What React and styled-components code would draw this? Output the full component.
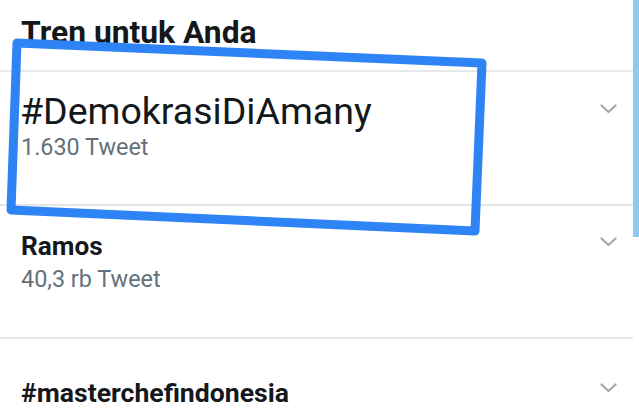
import React from "react";
import styled, { createGlobalStyle } from "styled-components";

const Global = createGlobalStyle`
  html, body { margin: 0; padding: 0; background: #ffffff; }
  body { font-family: Roboto, "Noto Sans", "Liberation Sans", sans-serif; }
`;

const Page = styled.div`
  position: relative;
  width: 639px;
  height: 420px;
  overflow: hidden;
  display: flex;
  align-items: flex-start;
  background: #fff;
`;

const Feed = styled.div`
  width: 633px;
  display: flex;
  flex-direction: column;
`;

const Scrollbar = styled.div`
  width: 6px;
  height: 237px;
  background: #8fcbf1;
`;

const Header = styled.h2`
  margin: 0;
  box-sizing: border-box;
  height: 72px;
  padding: 17px 0 0 21px;
  font-size: 31.8px;
  line-height: 1;
  font-weight: 700;
  color: #15181b;
  border-bottom: 2px solid #e6e9eb;
`;

const Row = styled.div`
  box-sizing: border-box;
  height: ${(p) => p.$h}px;
  padding: ${(p) => p.$top}px 16px 0 21px;
  display: flex;
  align-items: flex-start;
  justify-content: space-between;
  border-bottom: ${(p) => (p.$last ? "none" : "2px solid #e3e6e8")};
`;

const Texts = styled.div`
  display: flex;
  flex-direction: column;
`;

const Title = styled.div`
  font-size: ${(p) => p.$size}px;
  font-weight: ${(p) => (p.$regular ? 400 : 700)};
  line-height: 1;
  color: #15181b;
  margin-left: ${(p) => p.$shift || 0}px;
`;

const Count = styled.div`
  margin-top: ${(p) => p.$gap}px;
  font-size: ${(p) => p.$size}px;
  line-height: 1;
  color: #64717b;
`;

const Chevron = styled.svg`
  width: 17px;
  height: 10px;
  margin-top: ${(p) => p.$offset}px;
  flex: none;
`;

const Marker = styled.svg`
  position: absolute;
  left: 0;
  top: 0;
  width: 639px;
  height: 420px;
  pointer-events: none;
`;

const Down = ({ offset }) => (
  <Chevron $offset={offset} viewBox="0 0 17 10">
    <path d="M1.5 1.5 L8.5 8 L15.5 1.5" fill="none" stroke="#a2a9ae" strokeWidth="2.2" strokeLinecap="round" strokeLinejoin="round" />
  </Chevron>
);

const trends = [
  { title: "#DemokrasiDiAmany", size: 37.5, regular: true, shift: -1, count: "1.630 Tweet", csize: 23.4, gap: 5.5, h: 134, top: 21, chev: 11 },
  { title: "Ramos", size: 26.2, count: "40,3 rb Tweet", csize: 23.4, gap: 9, h: 133, top: 27, chev: 3.5 },
  { title: "#masterchefindonesia", size: 26.6, h: 90, top: 40.5, chev: 3.5, last: true },
];

export default function App() {
  return (
    <>
      <Global />
      <Page>
        <Feed>
          <Header>Tren untuk Anda</Header>
          {trends.map((t) => (
            <Row key={t.title} $h={t.h} $top={t.top} $last={t.last}>
              <Texts>
                <Title $size={t.size} $regular={t.regular} $shift={t.shift}>{t.title}</Title>
                {t.count && <Count $size={t.csize} $gap={t.gap}>{t.count}</Count>}
              </Texts>
              <Down offset={t.chev} />
            </Row>
          ))}
        </Feed>
        <Scrollbar />
        <Marker viewBox="0 0 639 420">
          <polygon
            points="17,43 482,63 475,231 11,210"
            fill="none"
            stroke="#2e84f5"
            strokeWidth="9"
            strokeLinejoin="round"
          />
        </Marker>
      </Page>
    </>
  );
}
